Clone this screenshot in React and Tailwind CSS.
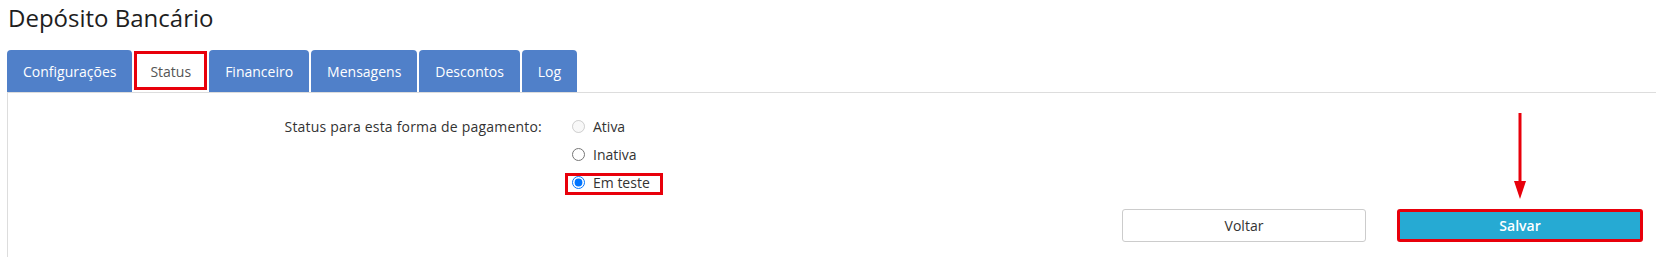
import React from "react";

const tabs = ["Configurações", "Status", "Financeiro", "Mensagens", "Descontos", "Log"];

function Radio({ label, checked, disabled, highlight }) {
  return (
    <label className="relative flex h-[28px] items-center gap-[8px] text-[14px] text-[#333]">
      <input
        type="radio"
        name="status"
        className="m-0 h-[13px] w-[13px]"
        defaultChecked={checked}
        disabled={disabled}
      />
      <span>{label}</span>
      {highlight && (
        <span className="pointer-events-none absolute left-[-7px] top-[5px] h-[22px] w-[98px] border-[3px] border-[#e8000b]" />
      )}
    </label>
  );
}

export default function App() {
  return (
    <div
      className="relative h-[257px] w-[1656px] overflow-hidden bg-white pl-[7px]"
      style={{ fontFamily: '"Open Sans", "Noto Sans", sans-serif' }}
    >
      <h1 className="pl-[1px] pt-[2px] text-[24px] font-normal leading-[32px] text-[#1e1e1e]">
        Depósito Bancário
      </h1>
      <div className="mt-[16px] flex gap-[2px]">
        {tabs.map((t) =>
          t === "Status" ? (
            <div
              key={t}
              className="relative flex h-[42px] items-center rounded-t-[4px] bg-white px-[16px] text-[14px] text-[#555]"
            >
              {t}
              <span className="pointer-events-none absolute left-0 right-0 top-[1px] bottom-[2px] border-[3px] border-[#e8000b]" />
            </div>
          ) : (
            <div
              key={t}
              className="flex h-[42px] items-center rounded-t-[4px] bg-[#5080c9] px-[16px] text-[14px] text-white"
            >
              {t}
            </div>
          )
        )}
      </div>
      <div className="h-[165px] border-l border-t border-[#dddddd] pt-[19px]">
        <div className="flex gap-[30px]">
          <div className="flex h-[28px] w-[534px] items-center justify-end text-[14px] tracking-[0.2px] text-[#333]">
            Status para esta forma de pagamento:
          </div>
          <div className="flex flex-col">
            <Radio label="Ativa" disabled />
            <Radio label="Inativa" />
            <Radio label="Em teste" checked highlight />
          </div>
        </div>
        <div className="mt-[13px] flex justify-end gap-[31px] pr-[13px]">
          <button className="h-[33px] w-[244px] rounded-[3px] border border-[#cccccc] bg-white text-[14px] text-[#333]">
            Voltar
          </button>
          <button className="h-[33px] w-[246px] rounded-[3px] border-[3px] border-[#e8000b] bg-[#26aad3] text-[14px] font-semibold text-white">
            Salvar
          </button>
        </div>
      </div>
      <svg
        className="pointer-events-none absolute left-[1513px] top-[113px]"
        width="14"
        height="86"
        viewBox="0 0 14 86"
      >
        <line x1="7" y1="0" x2="7" y2="70" stroke="#e8000b" strokeWidth="3" />
        <polygon points="1,68 13,68 7,86" fill="#e8000b" />
      </svg>
    </div>
  );
}
